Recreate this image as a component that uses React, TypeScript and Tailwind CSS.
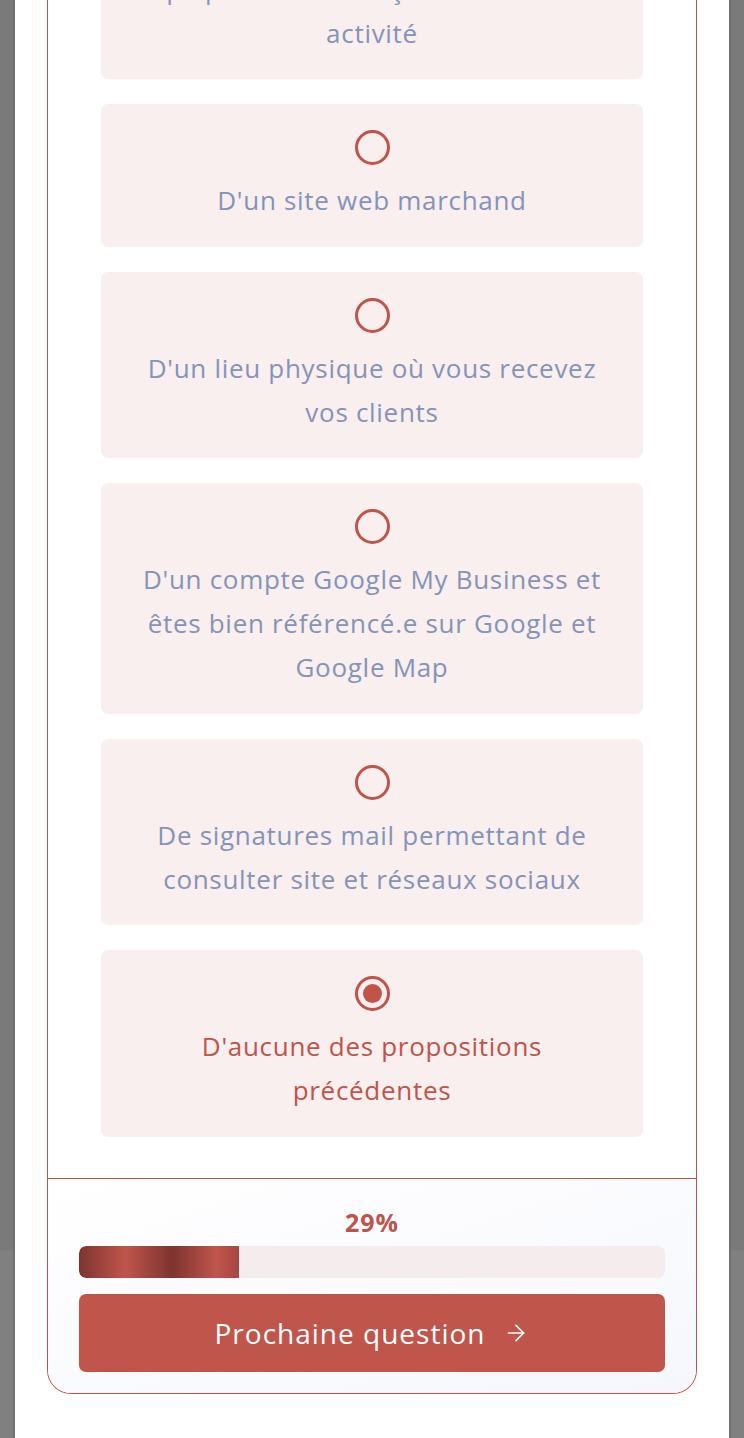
import React from 'react';
import { ArrowRight } from 'lucide-react';

const OPTIONS = [
  { label: "D'un site internet vitrine\nqui présente de façon claire votre\nactivité", selected: false },
  { label: "D'un site web marchand", selected: false },
  { label: "D'un lieu physique où vous recevez vos clients", selected: false },
  { label: "D'un compte Google My Business et êtes bien référencé.e sur Google et Google Map", selected: false },
  { label: 'De signatures mail permettant de consulter site et réseaux sociaux', selected: false },
  { label: "D'aucune des propositions précédentes", selected: true },
];

const Gutter = ({ side }: { side: 'left' | 'right' }) => (
  <div className={`w-[15px] shrink-0 flex flex-col ${side === 'left' ? 'border-r-2 border-[#6f6f6f]' : 'border-l-2 border-[#6f6f6f]'}`}>
    <div className="h-[1250px] bg-[#7a7a7a]" />
    <div className="flex-1 bg-[#808080]" />
  </div>
);

const Option = ({ label, selected }: { label: string; selected: boolean }) => (
  <div className="bg-[#f8efee] rounded-[7px] pt-[26px] pb-[24.5px] px-[38px] flex flex-col items-center">
    <div className="w-[35px] h-[35px] rounded-full border-[3px] border-[#c0544b] flex items-center justify-center">
      {selected && <div className="w-[19px] h-[19px] rounded-full bg-[#c0544b]" />}
    </div>
    <p
      className={`mt-[13px] whitespace-pre-line text-center text-[26px] tracking-[0.7px] leading-[44px] ${selected ? 'text-[#c0544b]' : 'text-[#8593b8]'}`}
    >
      {label}
    </p>
  </div>
);

export default function App() {
  return (
    <div className="h-[1438px] overflow-hidden flex font-['Open_Sans',_'Liberation_Sans',_sans-serif]">
      <Gutter side="left" />
      <div className="flex-1 bg-white px-[32px]">
        <div className="mt-[-151.5px] border border-t-0 border-[#c0544b] rounded-b-[24px] overflow-hidden">
          <div className="px-[53px] pb-[41px] flex flex-col gap-[25px]">
            {OPTIONS.map((o, i) => (
              <Option key={i} label={o.label} selected={o.selected} />
            ))}
          </div>
          <div className="border-t border-[#c0544b] bg-gradient-to-br from-white to-[#f6f7fd] px-[31px] pt-[28px] pb-[21px]">
            <div className="text-center text-[25px] tracking-[1px] leading-[30px] font-bold text-[#c0544b]">29%</div>
            <div className="mt-[9px] h-[32px] rounded-[7px] bg-[#f5eded] overflow-hidden">
              <div className="h-full w-[160px] rounded-l-[7px] bg-[linear-gradient(90deg,#7e342f_0%,#c0554c_29%,#7e342f_58%,#c0554c_86%,#a7463f_100%)]" />
            </div>
            <button className="mt-[16px] w-full h-[78px] rounded-[7px] bg-[#c0554b] text-white flex items-center justify-center gap-[18px] text-[28px] tracking-[1px]">
              <span>Prochaine question</span>
              <ArrowRight size={26} strokeWidth={1.5} />
            </button>
          </div>
        </div>
      </div>
      <Gutter side="right" />
    </div>
  );
}
